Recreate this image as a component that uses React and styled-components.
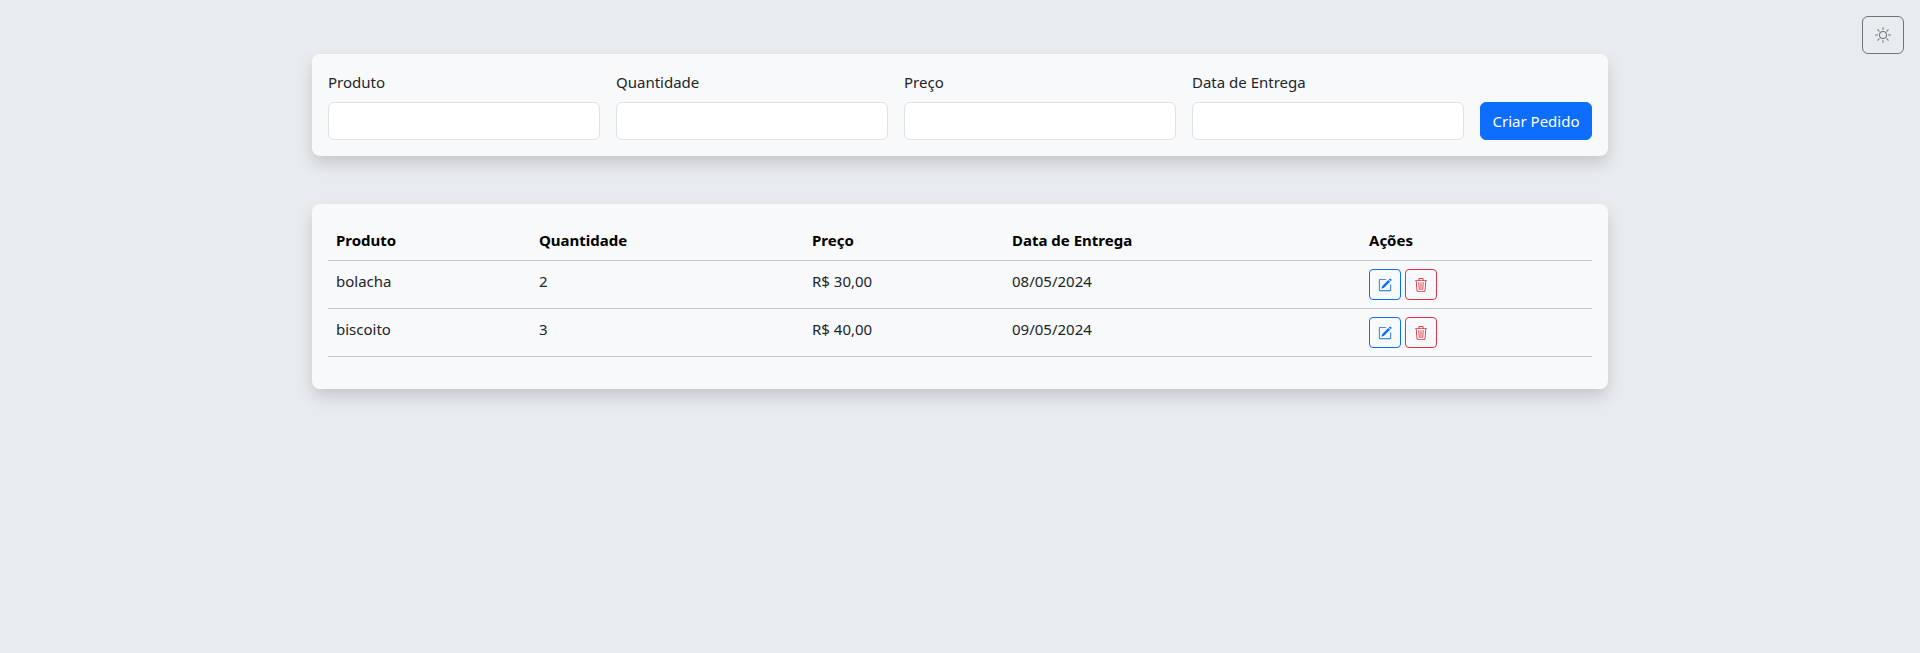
import React from "react";
import styled, { createGlobalStyle } from "styled-components";
import { BsSun, BsPencilSquare, BsTrash3 } from "react-icons/bs";

const Global = createGlobalStyle`
  html, body { margin: 0; padding: 0; }
  body {
    min-height: 653px;
    background: #e9ecef;
    color: #212529;
    font-family: "Noto Sans", "Open Sans", sans-serif;
    font-size: 15px;
    line-height: 24px;
  }
  * { box-sizing: border-box; }
`;

const Page = styled.main`
  width: 1296px;
  margin: 0 auto;
  padding-top: 54px;
  display: flex;
  flex-direction: column;
  gap: 48px;
`;

const ThemeButton = styled.button`
  position: absolute;
  top: 16px;
  right: 16px;
  width: 42px;
  height: 38px;
  display: flex;
  align-items: center;
  justify-content: center;
  padding: 0;
  background: transparent;
  color: #6c757d;
  border: 1px solid #6c757d;
  border-radius: 6px;
  font-size: 16px;
`;

const Card = styled.section`
  background: #f8f9fa;
  border-radius: 8px;
  box-shadow: 0 8px 16px rgba(0, 0, 0, 0.15);
  padding: 16px;
`;

const Form = styled.form`
  display: flex;
  align-items: flex-end;
  gap: 16px;
`;

const Field = styled.div`
  flex: 0 0 272px;
`;

const Label = styled.label`
  display: block;
  margin-bottom: 8px;
  color: #212529;
`;

const Input = styled.input`
  display: block;
  width: 100%;
  height: 38px;
  background: #fff;
  border: 1px solid #dee2e6;
  border-radius: 6px;
`;

const Submit = styled.button`
  width: 112px;
  height: 38px;
  padding: 0;
  background: #0d6efd;
  border: 1px solid #0d6efd;
  border-radius: 6px;
  color: #fff;
  font: inherit;
`;

const Table = styled.table`
  width: 1264px;
  table-layout: fixed;
  border-collapse: collapse;
  margin-bottom: 16px;
`;

const Row = styled.tr`
  border-bottom: 1px solid #c6c7c8;
`;

const Heading = styled.th`
  width: ${(p) => p.$width}px;
  height: 40px;
  padding: 8px;
  text-align: left;
  font-weight: 700;
  color: #000;
`;

const Cell = styled.td`
  height: 48px;
  padding: 8px;
  vertical-align: top;
  color: #212529;
`;

const Actions = styled.div`
  display: flex;
  gap: 4px;
`;

const IconButton = styled.button`
  width: 32px;
  height: 31px;
  display: flex;
  align-items: center;
  justify-content: center;
  padding: 0;
  background: transparent;
  border: 1px solid ${(p) => p.$color};
  border-radius: 4px;
  color: ${(p) => p.$color};
  font-size: 14px;
`;

const columns = [
  ["Produto", 203],
  ["Quantidade", 273],
  ["Preço", 200],
  ["Data de Entrega", 357],
  ["Ações", 231],
];

const orders = [
  ["bolacha", "2", "R$ 30,00", "08/05/2024"],
  ["biscoito", "3", "R$ 40,00", "09/05/2024"],
];

const fields = ["Produto", "Quantidade", "Preço", "Data de Entrega"];

export default function App() {
  return (
    <>
      <Global />
      <ThemeButton aria-label="Tema">
        <BsSun />
      </ThemeButton>
      <Page>
        <Card>
          <Form>
            {fields.map((f) => (
              <Field key={f}>
                <Label>{f}</Label>
                <Input />
              </Field>
            ))}
            <Submit type="button">Criar Pedido</Submit>
          </Form>
        </Card>
        <Card>
          <Table>
            <thead>
              <Row>
                {columns.map(([name, width]) => (
                  <Heading key={name} $width={width}>
                    {name}
                  </Heading>
                ))}
              </Row>
            </thead>
            <tbody>
              {orders.map((o) => (
                <Row key={o[0]}>
                  {o.map((v) => (
                    <Cell key={v}>{v}</Cell>
                  ))}
                  <Cell>
                    <Actions>
                      <IconButton $color="#0d6efd" aria-label="Editar">
                        <BsPencilSquare />
                      </IconButton>
                      <IconButton $color="#dc3545" aria-label="Excluir">
                        <BsTrash3 />
                      </IconButton>
                    </Actions>
                  </Cell>
                </Row>
              ))}
            </tbody>
          </Table>
        </Card>
      </Page>
    </>
  );
}
